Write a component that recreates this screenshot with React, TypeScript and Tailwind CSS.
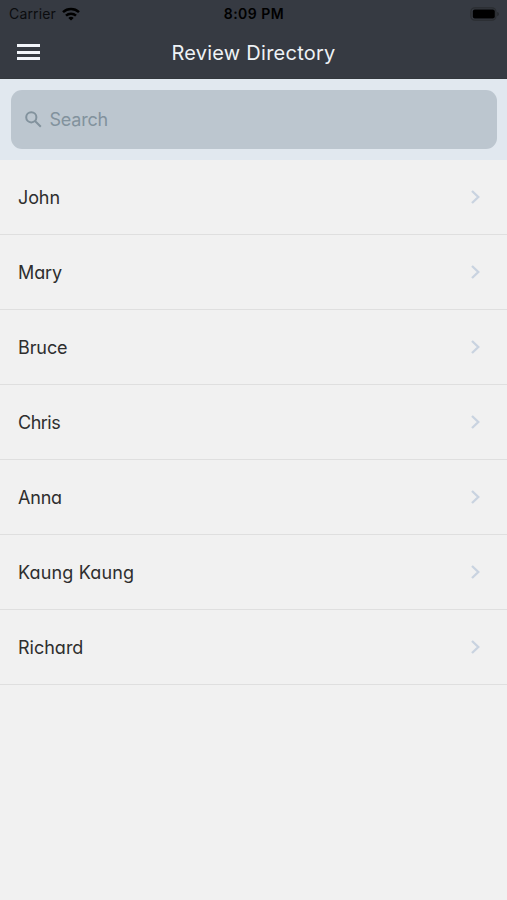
const names = [
  { name: "John", tracking: "tracking-[-0.1px]" },
  { name: "Mary", tracking: "tracking-[-0.1px]" },
  { name: "Bruce", tracking: "tracking-[-0.1px]" },
  { name: "Chris", tracking: "tracking-[-0.5px]" },
  { name: "Anna", tracking: "tracking-[-0.2px]" },
  { name: "Kaung Kaung", tracking: "tracking-[0.15px]" },
  { name: "Richard", tracking: "tracking-[0px]" },
];

function StatusBar() {
  return (
    <div className="grid grid-cols-3 items-center h-[27px] pl-[9px] pr-2 text-black">
      <div className="flex items-center gap-[6px]">
        <span className="text-[14px] tracking-[0.15px] text-[#0b0c0e]">Carrier</span>
        <svg width="18" height="14" viewBox="0 0 18 14" fill="none" stroke="currentColor" strokeWidth="2.5">
          <path d="M1 5.2C5.5 1 12.5 1 17 5.2" />
          <path d="M4 8.6C6.8 6 11.2 6 14 8.6" />
          <path d="M9 13.6L6.3 10.9C7.8 9.5 10.2 9.5 11.7 10.9Z" fill="currentColor" stroke="none" />
        </svg>
      </div>
      <span className="text-center text-[14px] font-semibold tracking-[0.5px] whitespace-nowrap">8:09 PM</span>
      <svg className="justify-self-end" width="29" height="14" viewBox="0 0 29 14">
        <rect x="0.9" y="0.9" width="25" height="12.2" rx="3.8" fill="none" stroke="#2a2d31" strokeWidth="1.3" />
        <rect x="2.8" y="2.6" width="22" height="9" rx="2" fill="#000" />
        <path d="M27.3 5v4.2c1-.4 1.5-1.2 1.5-2.1S28.3 5.4 27.3 5Z" fill="#24272b" />
      </svg>
    </div>
  );
}

function Header() {
  return (
    <header className="h-[79px] bg-[#363a42] border-b border-[#33373c]">
      <StatusBar />
      <div className="grid grid-cols-[1fr_auto_1fr] items-center h-[50px] px-[17px]">
        <button className="flex flex-col gap-[3.5px] w-[23px]" aria-label="Menu">
          <span className="h-[3px] w-full bg-[#f2f5fa]" />
          <span className="h-[3px] w-full bg-[#f2f5fa]" />
          <span className="h-[3px] w-full bg-[#f2f5fa]" />
        </button>
        <h1 className="pt-px text-[20px] tracking-[0.25px] text-[#eef2f6] [font-feature-settings:'cv11']">Review Directory</h1>
      </div>
    </header>
  );
}

export default function App() {
  return (
    <div className="min-h-screen bg-[#f1f1f1] font-['Inter',sans-serif]">
      <Header />
      <div className="h-[81px] bg-[#e1e8ef] px-[10.5px] pt-[11px]">
        <div className="flex items-center h-[59px] rounded-[11px] bg-[#bcc6cf] pl-[14.5px] gap-[7.5px] text-[#82929d]">
          <svg width="17" height="17" viewBox="0 0 17 17" fill="none" stroke="currentColor" strokeWidth="2">
            <circle cx="6.3" cy="6.3" r="5.1" />
            <path d="M10 10L15.8 15.8" />
          </svg>
          <span className="text-[18px] tracking-[-0.2px]">Search</span>
        </div>
      </div>
      <ul>
        {names.map((item) => (
          <li key={item.name} className="flex items-center justify-between h-[75px] pl-[18px] pr-[27px] border-b border-[#dfdfdf]">
            <span className={`text-[18px] text-[#2e2e2e] [font-feature-settings:'cv11'] ${item.tracking}`}>{item.name}</span>
            <svg width="9" height="14" viewBox="0 0 9 14" fill="none" stroke="#c9d3e0" strokeWidth="2.3">
              <path d="M1 1L7.300 7L1 13" />
            </svg>
          </li>
        ))}
      </ul>
    </div>
  );
}
